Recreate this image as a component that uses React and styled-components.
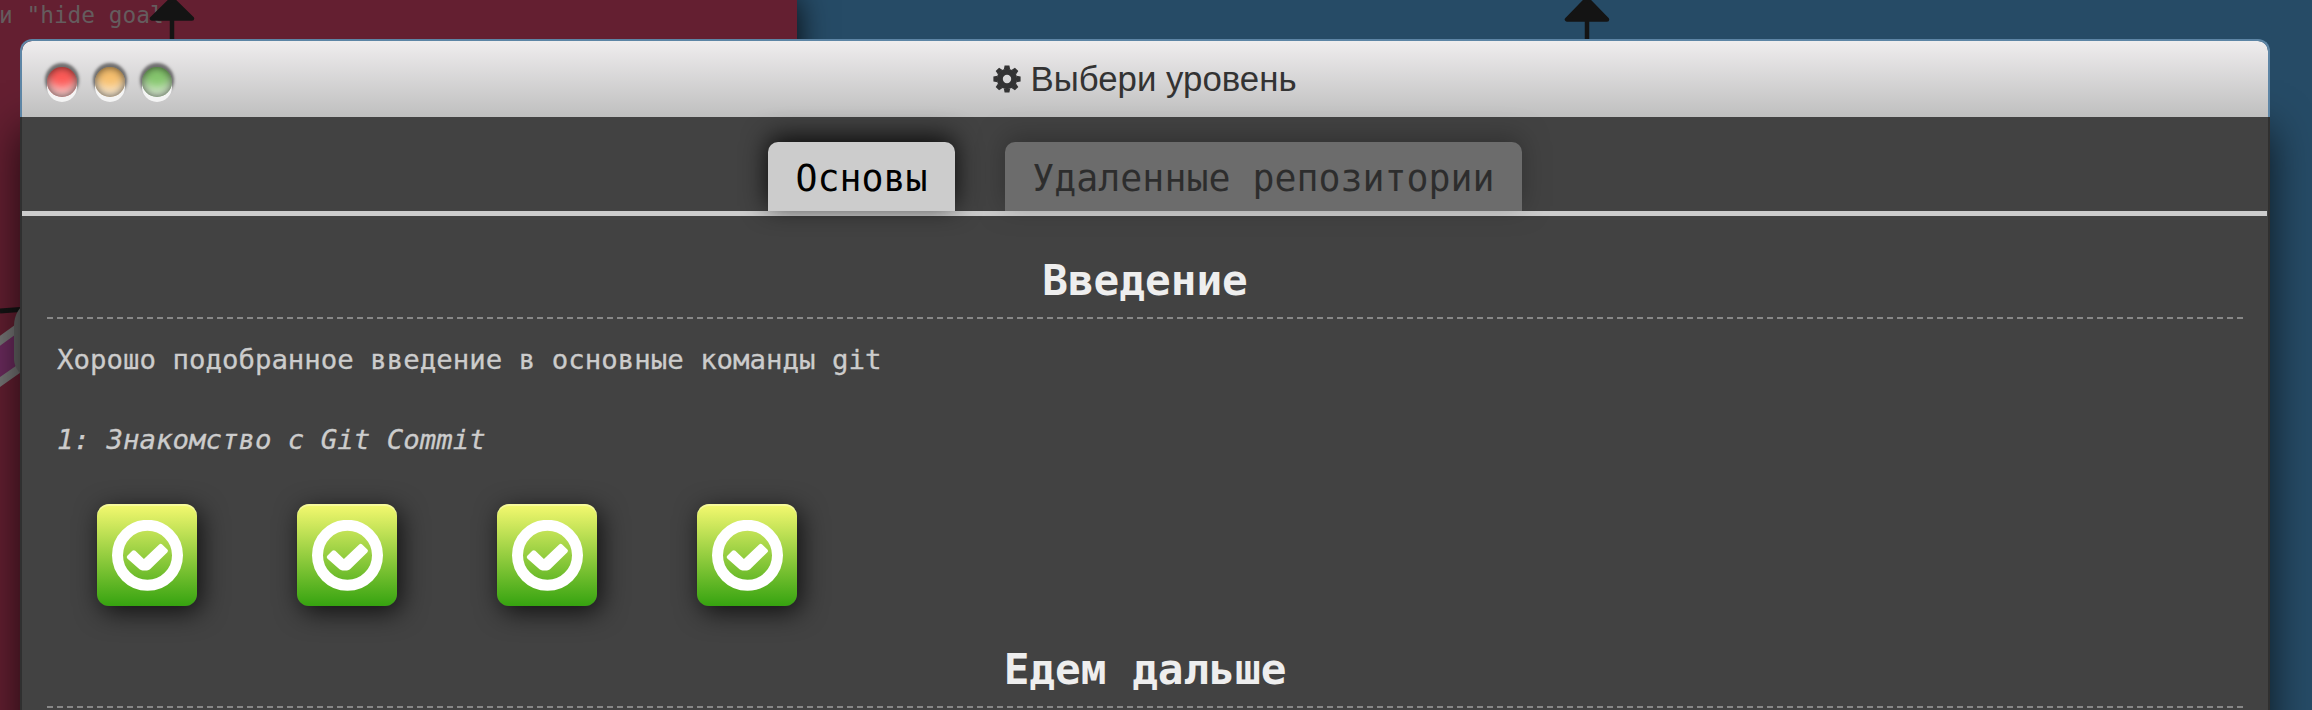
import React from "react";
import styled, { createGlobalStyle } from "styled-components";

const mono = `"DejaVu Sans Mono", "Liberation Mono", monospace`;

const GlobalStyle = createGlobalStyle`
  *, *::before, *::after { box-sizing: border-box; }
  body { margin: 0; overflow: hidden; }
`;

const Screen = styled.main`
  position: relative;
  height: 710px;
  padding: 39px 42px 0 20px;
  overflow: hidden;
  background: #264b66;
`;

const GoalPanel = styled.aside`
  position: absolute;
  top: 0;
  left: 0;
  width: 797px;
  height: 710px;
  background: #641f31;
  box-shadow: 0 0 30px rgba(0, 0, 0, 0.9);
`;

const GoalHint = styled.p`
  margin: 0 0 0 -1px;
  padding-top: 1px;
  color: #655c5e;
  font: 22.8px/29px ${mono};
  white-space: pre;
`;

const TreeLayer = styled.svg`
  position: absolute;
  top: 0;
  left: 0;
`;

const Window = styled.section`
  position: relative;
  display: flex;
  flex-direction: column;
`;

const TitleBar = styled.header`
  position: relative;
  z-index: 1;
  display: flex;
  align-items: center;
  height: 78px;
  padding: 0 25px;
  border: 2px solid #5d85a5;
  border-bottom: 0;
  border-radius: 12px 12px 0 0;
  background: linear-gradient(#efedee, #bfbfbf) padding-box;
`;

const Lights = styled.div`
  display: flex;
  flex: 1;
  gap: 17.5px;
  padding-top: 5px;
`;

const Light = styled.span`
  width: 30px;
  height: 30px;
  border-radius: 50%;
  background: ${(p) => p.$color};
  box-shadow:
    0 5px 0 #f4f4f4,
    0 -2px 3px 2px rgba(0, 0, 0, 0.5),
    inset 0 0 9px rgba(0, 0, 0, 0.65),
    inset 0 -12px 10px -3px rgba(255, 255, 255, 0.7);
`;

const WindowTitle = styled.h1`
  display: flex;
  align-items: center;
  gap: 9px;
  margin: 0;
  color: #333;
  font: 400 34.8px/40px "Liberation Sans", Arial, sans-serif;
  white-space: nowrap;
`;

const Balance = styled.div`
  flex: 1;
`;

const Body = styled.div`
  height: 640px;
  border: solid #303030;
  border-width: 0 2px;
  background: #424242;
  box-shadow: 0 12px 40px rgba(0, 0, 0, 0.7);
`;

const Tabs = styled.nav`
  position: relative;
  z-index: 2;
  display: flex;
  justify-content: center;
  gap: 50px;
  height: 99px;
  margin-right: 1px;
  padding: 25px 0 0 1px;
  border-bottom: 5px solid #ccc;
`;

const Tab = styled.button`
  height: 69px;
  padding: 5px 27.4px 0;
  border: 0;
  border-radius: 10px 10px 0 0;
  background: #ccc;
  color: #000;
  font: 36.55px/64px ${mono};
  opacity: ${(p) => (p.$active ? 1 : 0.3)};
  box-shadow: 0 -5px 26px rgba(0, 0, 0, 0.85);
`;

const Sequence = styled.section`
  height: 389px;
  padding: 34px 25px 0;
`;

const SequenceTitle = styled.h2`
  height: 69px;
  margin: 0;
  border-bottom: 2px dashed #888;
  color: #eee;
  font: 700 42.7px/61px ${mono};
  text-align: center;
`;

const Text = styled.p`
  height: 40px;
  margin: 21px 10px 0;
  color: #ccc;
  font: ${(p) => (p.$italic ? "italic" : "normal")} 27.4px/40px ${mono};
  -webkit-text-stroke: 0.3px #ccc;
  & + & { margin-top: 40px; }
`;

const Levels = styled.div`
  display: flex;
  gap: 100px;
  padding: 44px 50px 0;
`;

const LevelButton = styled.button`
  display: flex;
  align-items: center;
  justify-content: center;
  width: 100px;
  height: 102px;
  padding: 0;
  border: 0;
  border-radius: 12px;
  background: linear-gradient(#f5f970, #36a310);
  box-shadow: 4px 6px 26px rgba(0, 0, 0, 0.75), inset 0 2px 0 rgba(255, 255, 255, 0.3);
`;

const teeth = [0, 45, 90, 135];

const Gear = () => (
  <svg width="28" height="28" viewBox="-14 -14 28 28">
    <circle r="7.2" fill="none" stroke="#333" strokeWidth="6" />
    {teeth.map((angle) => (
      <path
        key={angle}
        transform={`rotate(${angle})`}
        d="M-3.2-9.5-2.4-13.6h4.8L3.2-9.5ZM-3.2 9.5-2.4 13.6h4.8L3.2 9.5Z"
        fill="#333"
      />
    ))}
  </svg>
);

const Check = () => (
  <svg width="71" height="71" viewBox="0 0 71 71">
    <circle cx="35.5" cy="35.3" r="30" fill="none" stroke="#fff" strokeWidth="11" />
    <path
      d="M15.3 35.8l5-5q1.5-1.3 3 0l8.6 8.2 15.3-14.6q1.5-1.3 3 0l5.2 5.2q1.2 1.3 0 2.6L38 49.3q-1.3 1.1-3 1.1h-4.5q-1.7 0-3-1.1L15.3 38.4q-1.2-1.3 0-2.6Z"
      fill="#fff"
    />
  </svg>
);

const Tree = () => (
  <TreeLayer width="2312" height="710">
    <g fill="#141414" stroke="#141414" strokeWidth="4.5" strokeLinejoin="round">
      <path d="M172-1 152 18.5h40Z" />
      <path d="M172 18v30" />
      <path d="M1587-1 1567 19.5h40Z" />
      <path d="M1587 18v30" />
    </g>
    <path d="M0 311 20 309.5" stroke="#141414" strokeWidth="5" />
    <path d="M-10 348 30 319V361L-10 389Z" fill="#6c2b5e" stroke="#777" strokeWidth="8" />
    <path d="M30 300Q14 309 14 326V359Q14 371 30 382Z" fill="#686868" />
  </TreeLayer>
);

const lights = ["#fc5b58", "#f7c06f", "#86c66e"];
const levels = [1, 2, 3, 4];

export default function App() {
  return (
    <>
      <GlobalStyle />
      <Screen>
        <GoalPanel>
          <GoalHint>{'и "hide goal'}</GoalHint>
        </GoalPanel>
        <Tree />
        <Window>
          <TitleBar>
            <Lights>
              {lights.map((color) => (
                <Light key={color} $color={color} />
              ))}
            </Lights>
            <WindowTitle>
              <Gear />
              Выбери уровень
            </WindowTitle>
            <Balance />
          </TitleBar>
          <Body>
            <Tabs>
              <Tab $active>Основы</Tab>
              <Tab>Удаленные репозитории</Tab>
            </Tabs>
            <Sequence>
              <SequenceTitle>Введение</SequenceTitle>
              <Text>Хорошо подобранное введение в основные команды git</Text>
              <Text $italic>1: Знакомство с Git Commit</Text>
              <Levels>
                {levels.map((level) => (
                  <LevelButton key={level}>
                    <Check />
                  </LevelButton>
                ))}
              </Levels>
            </Sequence>
            <Sequence>
              <SequenceTitle>Едем дальше</SequenceTitle>
            </Sequence>
          </Body>
        </Window>
      </Screen>
    </>
  );
}
